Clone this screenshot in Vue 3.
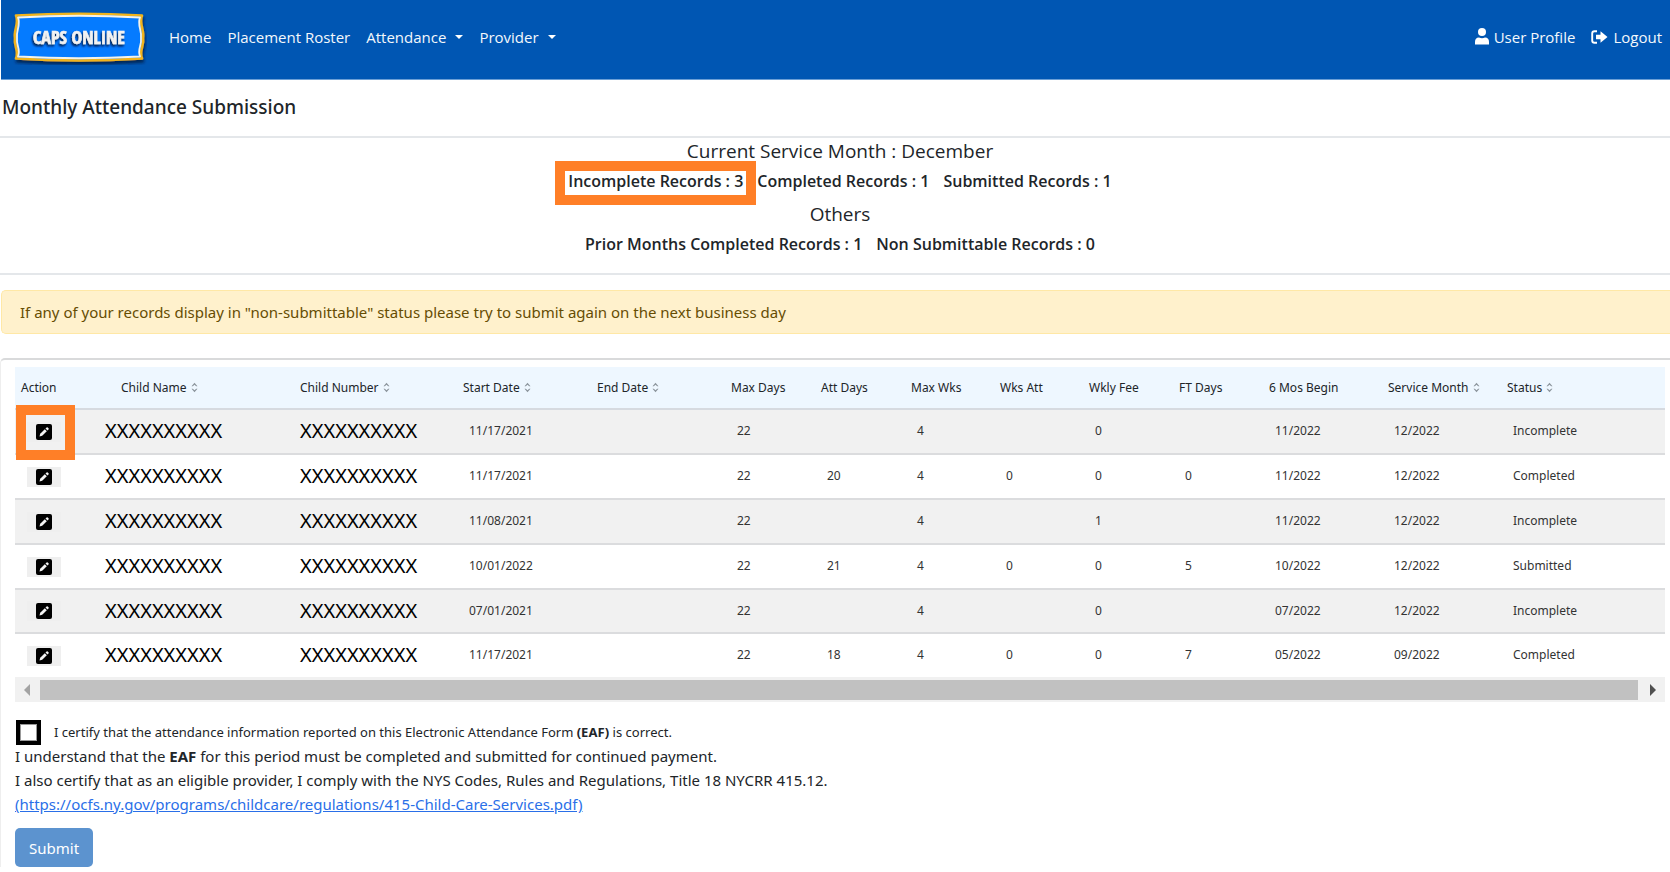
<script setup>
import { ref } from 'vue'

const certified = ref(false)

const columns = [
  { key: 'action', label: 'Action' },
  { key: 'name', label: 'Child Name', sortable: true },
  { key: 'number', label: 'Child Number', sortable: true },
  { key: 'start', label: 'Start Date', sortable: true },
  { key: 'end', label: 'End Date', sortable: true },
  { key: 'maxDays', label: 'Max Days' },
  { key: 'attDays', label: 'Att Days' },
  { key: 'maxWks', label: 'Max Wks' },
  { key: 'wksAtt', label: 'Wks Att' },
  { key: 'fee', label: 'Wkly Fee' },
  { key: 'ftDays', label: 'FT Days' },
  { key: 'begin', label: '6 Mos Begin' },
  { key: 'month', label: 'Service Month', sortable: true },
  { key: 'status', label: 'Status', sortable: true },
]

const fields = ['start', 'end', 'maxDays', 'attDays', 'maxWks', 'wksAtt', 'fee', 'ftDays', 'begin', 'month', 'status']

const rows = [
  ['11/17/2021', '', '22', '', '4', '', '0', '', '11/2022', '12/2022', 'Incomplete'],
  ['11/17/2021', '', '22', '20', '4', '0', '0', '0', '11/2022', '12/2022', 'Completed'],
  ['11/08/2021', '', '22', '', '4', '', '1', '', '11/2022', '12/2022', 'Incomplete'],
  ['10/01/2022', '', '22', '21', '4', '0', '0', '5', '10/2022', '12/2022', 'Submitted'],
  ['07/01/2021', '', '22', '', '4', '', '0', '', '07/2022', '12/2022', 'Incomplete'],
  ['11/17/2021', '', '22', '18', '4', '0', '0', '7', '05/2022', '09/2022', 'Completed'],
]
</script>

<template>
  <div class="page">
    <header class="navbar">
      <a href="#" class="brand" aria-label="CAPS Online">
        <svg width="136" height="56" viewBox="10 9 136 56">
          <defs>
            <filter id="frame-shadow" x="-10%" y="-10%" width="120%" height="140%">
              <feDropShadow dx="1" dy="3" stdDeviation="1.5" flood-color="#001a40" flood-opacity="0.8" />
            </filter>
            <filter id="word-shadow" x="-10%" y="-30%" width="120%" height="170%">
              <feDropShadow dx="-1" dy="2" stdDeviation="1.2" flood-color="#001030" flood-opacity="0.9" />
            </filter>
          </defs>
          <path
            d="M15 15.500Q78 12 141 15.500C137.500 23 143.500 30 142 38C143.500 46 137.500 51 141 58.500Q78 62.500 15 58.500C18.500 51 12.500 46 14 38C12.500 30 18.500 23 15 15.500Z"
            fill="#0a7cff" stroke="#f0b31c" stroke-width="2.600" stroke-linejoin="round" filter="url(#frame-shadow)"
          />
          <path
            d="M17 17.500Q78 14 139 17.500C136 25 141 30 140 38C141 46 136 49 139 56.500Q78 60 17 56.500C20 49 15 46 16 38C15 30 20 25 17 17.500Z"
            fill="#057bff" stroke="#f4f3ea" stroke-width="1.800" stroke-linejoin="round"
          />
          <text x="78" y="44" text-anchor="middle" class="wordmark" filter="url(#word-shadow)">CAPS ONLINE</text>
        </svg>
      </a>
      <nav class="links">
        <a href="#">Home</a>
        <a href="#">Placement Roster</a>
        <a href="#" class="drop">Attendance<span class="caret"></span></a>
        <a href="#" class="drop">Provider<span class="caret"></span></a>
      </nav>
      <nav class="account">
        <a href="#">
          <svg width="14" height="17" viewBox="0 0 14 17" fill="#fff">
            <circle cx="7" cy="4" r="4" />
            <path d="M0 16.500V14Q0 9.500 4 9.500Q7 11 10 9.500Q14 9.500 14 14V16.500Z" />
          </svg>
          User Profile
        </a>
        <a href="#">
          <svg width="17" height="14" viewBox="0 0 17 14">
            <path d="M6 1.200H3.500Q1.200 1.200 1.200 3.500V10.500Q1.200 12.800 3.500 12.800H6" fill="none" stroke="#fff" stroke-width="1.900" />
            <path d="M5 4.800H9.500V1.200L16.500 7L9.500 12.800V9.200H5Z" fill="#fff" />
          </svg>
          Logout
        </a>
      </nav>
    </header>

    <h1 class="title">Monthly Attendance Submission</h1>

    <section class="summary">
      <h2>Current Service Month : December</h2>
      <p class="counts">
        <span class="marked">Incomplete Records : 3</span>
        <span>Completed Records : 1</span>
        <span>Submitted Records : 1</span>
      </p>
      <h2>Others</h2>
      <p class="counts">
        <span>Prior Months Completed Records : 1</span>
        <span>Non Submittable Records : 0</span>
      </p>
    </section>

    <div class="alert" role="alert">
      If any of your records display in "non-submittable" status please try to submit again on the next business day
    </div>

    <main class="card">
      <table>
        <colgroup>
          <col v-for="c in columns" :key="c.key" :class="'w-' + c.key">
        </colgroup>
        <thead>
          <tr>
            <th v-for="c in columns" :key="c.key" scope="col" :class="'h-' + c.key">
              {{ c.label }}
              <svg v-if="c.sortable" class="sort" width="7" height="11" viewBox="0 0 7 11" fill="#8b949c">
                <path d="M0.500 4.200L3.500 0.800L6.500 4.200L5.200 4.200L3.500 2.800L1.800 4.200ZM0.500 6.800L3.500 10.200L6.500 6.800L5.200 6.800L3.500 8.200L1.800 6.800Z" />
              </svg>
            </th>
          </tr>
        </thead>
        <tbody>
          <tr v-for="(row, i) in rows" :key="i">
            <td class="action">
              <button type="button" class="edit" :class="{ boxed: i === 0 }" aria-label="Edit record">
                <svg width="16" height="16" viewBox="0 0 16 16">
                  <rect width="16" height="16" rx="2" fill="#000" />
                  <path d="M3.500 12.500L4.200 9.800L8.800 5.200L10.800 7.200L6.200 11.800Z" fill="#f4f4f4" />
                  <path d="M9.500 4.500L10.600 3.400Q11.200 3 11.700 3.500L12.500 4.300Q13 4.800 12.500 5.400L11.500 6.500Z" fill="#f4f4f4" />
                </svg>
              </button>
            </td>
            <td class="masked">XXXXXXXXXX</td>
            <td class="masked">XXXXXXXXXX</td>
            <td v-for="(f, j) in fields" :key="f">{{ row[j] }}</td>
          </tr>
        </tbody>
      </table>
      <div class="scroll" aria-hidden="true">
        <span class="arrow left"></span>
        <span class="thumb"></span>
        <span class="arrow right"></span>
      </div>

      <form class="certify" @submit.prevent>
        <div class="agree">
          <input id="certify" v-model="certified" type="checkbox">
          <label for="certify">I certify that the attendance information reported on this Electronic Attendance Form <b>(EAF)</b> is correct.</label>
        </div>
        <p>I understand that the <b>EAF</b> for this period must be completed and submitted for continued payment.</p>
        <p>I also certify that as an eligible provider, I comply with the NYS Codes, Rules and Regulations, Title 18 NYCRR 415.12.</p>
        <p><a href="#">(https://ocfs.ny.gov/programs/childcare/regulations/415-Child-Care-Services.pdf)</a></p>
        <button type="submit" class="submit">Submit</button>
      </form>
    </main>
  </div>
</template>

<style>
body {
  background: #fff;
}
</style>

<style scoped>
.page {
  font-family: "Noto Sans", "Open Sans", sans-serif;
  font-size: 15px;
  color: #212529;
}
.page * {
  box-sizing: border-box;
}
.navbar {
  display: flex;
  align-items: center;
  height: 80px;
  padding: 0 8px 6px 10px;
  margin-left: 1px;
  font-family: "Open Sans", "Noto Sans", sans-serif;
  background: #0056b3;
  border-bottom: 1px solid #6c9fd6;
}
.brand {
  display: flex;
}
.wordmark {
  font: bold 18px "Liberation Sans Narrow", "Open Sans Condensed", sans-serif;
  fill: #f2f2f2;
  stroke: #f2f2f2;
  stroke-width: 0.6px;
}
.links,
.account {
  display: flex;
  align-items: center;
  gap: 16px;
}
.links {
  margin-left: 22px;
}
.account {
  margin-left: auto;
}
.links a,
.account a {
  display: flex;
  align-items: center;
  gap: 5px;
  color: #f4f8fc;
  text-decoration: none;
}
.links .drop {
  gap: 9px;
}
.caret {
  border: 4px solid transparent;
  border-top-color: #fff;
  border-bottom: 0;
}
.title {
  margin: 0;
  padding: 0 2px;
  height: 58px;
  line-height: 54px;
  font-size: 19px;
  font-weight: 500;
  border-bottom: 2px solid #e4e7ea;
}
.summary {
  padding: 0 0 9px 10px;
  border-bottom: 2px solid #e4e7ea;
  font-family: "Open Sans", "Noto Sans", sans-serif;
  text-align: center;
}
.summary h2 {
  margin: 0;
  font-size: 19px;
  font-weight: 500;
  line-height: 27px;
}
.counts {
  display: flex;
  justify-content: center;
  gap: 14px;
  margin: 0;
  padding-bottom: 3px;
  font-size: 16px;
  line-height: 33px;
  font-weight: 600;
}
.marked {
  position: relative;
}
.marked::after {
  content: "";
  position: absolute;
  inset: -4px -13px -7px -13px;
  border: 10px solid #ff7f27;
}
.alert {
  margin: 15px 0 24px 1px;
  padding: 0 18px;
  line-height: 42px;
  color: #664d03;
  background: #fff1cc;
  border: 1px solid #ffe8a6;
  border-right: 0;
  border-radius: 5px 0 0 5px;
}
.card {
  padding: 7px 5px 0 14px;
  border-top: 2px solid #d9dadb;
  border-left: 1px solid #eee;
  border-top-left-radius: 5px;
}
table {
  width: 100%;
  table-layout: fixed;
  border-collapse: separate;
  border-spacing: 0;
  font-size: 12px;
}
.w-action { width: 78px; }
.w-name { width: 195px; }
.w-number { width: 169px; }
.w-start, .w-end { width: 134px; }
.w-maxDays, .w-attDays, .w-fee, .w-ftDays { width: 90px; }
.w-maxWks, .w-wksAtt { width: 89px; }
.w-begin, .w-month { width: 119px; }
.w-status { width: 164px; }
th {
  height: 43px;
  padding: 0 0 0 6px;
  text-align: left;
  font-weight: 400;
  white-space: nowrap;
  background: #eef7ff;
  border-bottom: 2px solid #d6dae0;
}
.h-name { padding-left: 28px; }
.h-number { padding-left: 12px; }
.sort {
  margin-left: 1px;
  vertical-align: -1px;
}
td {
  height: 45px;
  padding: 0 0 2px 12px;
  color: #333;
  border-bottom: 2px solid #dbdcde;
}
tbody tr:nth-child(odd) td {
  background: #f1f1f1;
}
tbody tr:nth-child(n + 5) td {
  height: 44px;
}
tbody tr:last-child td {
  height: 43px;
  border-bottom: 0;
}
.masked {
  font-size: 20px;
  color: #000;
}
.action {
  padding: 0 0 0 12px;
}
.edit {
  position: relative;
  display: flex;
  align-items: center;
  justify-content: center;
  width: 34px;
  height: 20px;
  padding: 0;
  border: 0;
  background: #efefef;
}
.boxed::after {
  content: "";
  position: absolute;
  inset: -17px -14px -18px -11px;
  border: 10px solid #ff7f27;
}
.scroll {
  display: flex;
  align-items: center;
  height: 25px;
  background: #f1f1f1;
}
.thumb {
  flex: 1;
  height: 20px;
  background: #c1c1c1;
}
.arrow {
  border: 6px solid transparent;
}
.left {
  margin: 0 10px 0 9px;
  border-left: 0;
  border-right-color: #a3a3a3;
}
.right {
  margin: 0 9px 0 12px;
  border-right: 0;
  border-left-color: #505050;
}
.certify {
  padding-top: 18px;
}
.agree {
  display: flex;
  align-items: center;
  gap: 13px;
  height: 24px;
  padding-left: 1px;
  font-size: 13px;
}
.agree input {
  appearance: none;
  width: 25px;
  height: 25px;
  margin: 0;
  background: #fff;
  border: 4px solid #000;
  box-shadow: inset 0 0 0 1px #999;
}
.certify p {
  margin: 0;
  line-height: 24px;
}
.certify a {
  color: #2a6fe8;
}
.submit {
  margin-top: 12px;
  padding: 0 14px;
  height: 39px;
  font: inherit;
  color: #fff;
  background: #5c93cf;
  border: 0;
  border-radius: 5px;
}
</style>
